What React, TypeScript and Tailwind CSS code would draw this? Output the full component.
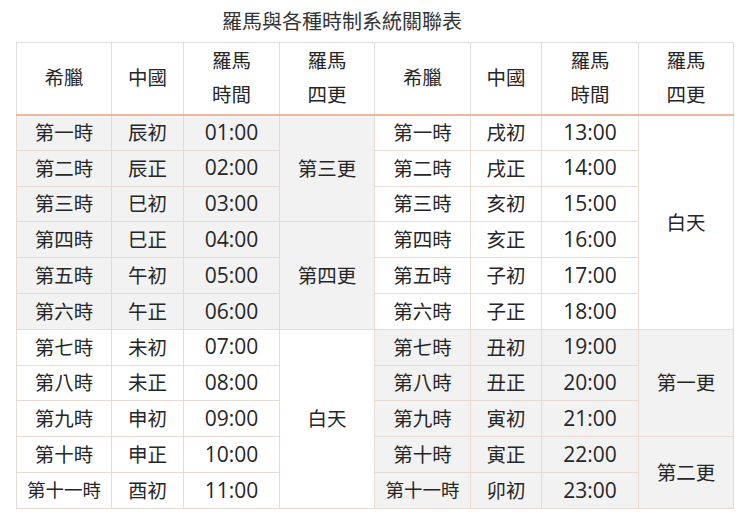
const rows = [
  ['第一時', '辰初', '01:00', '第一時', '戌初', '13:00'],
  ['第二時', '辰正', '02:00', '第二時', '戌正', '14:00'],
  ['第三時', '巳初', '03:00', '第三時', '亥初', '15:00'],
  ['第四時', '巳正', '04:00', '第四時', '亥正', '16:00'],
  ['第五時', '午初', '05:00', '第五時', '子初', '17:00'],
  ['第六時', '午正', '06:00', '第六時', '子正', '18:00'],
  ['第七時', '未初', '07:00', '第七時', '丑初', '19:00'],
  ['第八時', '未正', '08:00', '第八時', '丑正', '20:00'],
  ['第九時', '申初', '09:00', '第九時', '寅初', '21:00'],
  ['第十時', '申正', '10:00', '第十時', '寅正', '22:00'],
  ['第十一時', '酉初', '11:00', '第十一時', '卯初', '23:00'],
];

// rowspan cells for the two 羅馬四更 columns, keyed by starting row
const leftWatch: Record<number, [string, number]> = { 0: ['第三更', 3], 3: ['第四更', 3], 6: ['白天', 5] };
const rightWatch: Record<number, [string, number]> = { 0: ['白天', 6], 6: ['第一更', 3], 9: ['第二更', 2] };

const td = 'border border-[#e6dad2] text-center align-middle p-0';
const th = 'border border-[#dedede] border-b-2 border-b-[#eab89f] text-center align-middle font-normal p-0 leading-[34px]';

export default function App() {
  return (
    <div className="w-[740px] h-[524px] bg-white text-[#262626]" style={{ fontFamily: '"Open Sans", "Noto Sans CJK TC", sans-serif' }}>
      <h1 className="text-center text-[20px] leading-[28px] pt-[8px] pb-[6px] pr-[56px] text-[#333] font-normal">羅馬與各種時制系統關聯表</h1>
      <table className="ml-[16px] w-[717px] border-collapse table-fixed text-[19.5px]">
        <colgroup>
          <col className="w-[95px]" />
          <col className="w-[72px]" />
          <col className="w-[96px]" />
          <col className="w-[95px]" />
          <col className="w-[96px]" />
          <col className="w-[71px]" />
          <col className="w-[97px]" />
          <col className="w-[95px]" />
        </colgroup>
        <thead>
          <tr className="h-[72px]">
            <th className={th}>希臘</th>
            <th className={th}>中國</th>
            <th className={th}>羅馬<br />時間</th>
            <th className={th}>羅馬<br />四更</th>
            <th className={th}>希臘</th>
            <th className={th}>中國</th>
            <th className={th}>羅馬<br />時間</th>
            <th className={th}>羅馬<br />四更</th>
          </tr>
        </thead>
        <tbody>
          {rows.map((r, i) => {
            const leftBg = i < 6 ? 'bg-[#f2f2f2]' : 'bg-white';
            const rightBg = i < 6 ? 'bg-white' : 'bg-[#f2f2f2]';
            const lw = leftWatch[i];
            const rw = rightWatch[i];
            return (
              <tr key={i} className="h-[35.8px]">
                <td className={`${td} ${leftBg} ${r[0].length > 3 ? 'text-[18.5px]' : ''}`}>{r[0]}</td>
                <td className={`${td} ${leftBg}`}>{r[1]}</td>
                <td className={`${td} ${leftBg} text-[21px]`}>{r[2]}</td>
                {lw && (
                  <td rowSpan={lw[1]} className={`${td} ${i < 6 ? 'bg-[#f2f2f2]' : 'bg-white'}`}>{lw[0]}</td>
                )}
                <td className={`${td} ${rightBg} ${r[3].length > 3 ? 'text-[18.5px]' : ''}`}>{r[3]}</td>
                <td className={`${td} ${rightBg}`}>{r[4]}</td>
                <td className={`${td} ${rightBg} text-[21px]`}>{r[5]}</td>
                {rw && (
                  <td rowSpan={rw[1]} className={`${td} ${i < 6 ? 'bg-white' : 'bg-[#f2f2f2]'}`}>{rw[0]}</td>
                )}
              </tr>
            );
          })}
        </tbody>
      </table>
    </div>
  );
}
